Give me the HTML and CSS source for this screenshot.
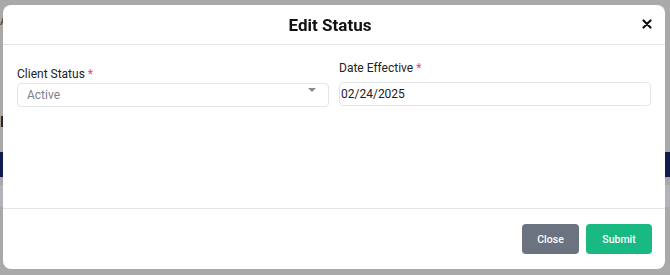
FILE: index.html
```html
<!DOCTYPE html>
<html lang="en">
<head>
    <meta charset="UTF-8">
    <title>Edit Status</title>
    <link rel="stylesheet" href="styles.css">
</head>
<body>
    <!-- page behind the dimmed backdrop -->
    <div class="page">
        <div class="page-title">A</div>
        <div class="page-heading">I</div>
        <div class="page-table-head"></div>
        <div class="page-row"></div>
    </div>

    <div class="modal">
        <div class="modal-header">
            <h2>Edit Status</h2>
            <button class="modal-close" aria-label="Close">
                <svg width="10" height="10" viewBox="0 0 10 10">
                    <path d="M1.5 1.5 L8.5 8.5 M8.5 1.5 L1.5 8.5" stroke="#111" stroke-width="2.2" stroke-linecap="round"/>
                </svg>
            </button>
        </div>

        <div class="modal-body">
            <div class="form-group">
                <label class="label-low">Client Status <span class="req">*</span></label>
                <div class="select">
                    <span>Active</span>
                    <span class="caret"></span>
                </div>
            </div>
            <div class="form-group">
                <label>Date Effective <span class="req">*</span></label>
                <input type="text" class="date-input" value="02/24/2025">
            </div>
        </div>

        <div class="modal-footer">
            <button class="btn btn-close">Close</button>
            <button class="btn btn-submit">Submit</button>
        </div>
    </div>
</body>
</html>
```

FILE: styles.css
```css
:root {
    --backdrop: #a9a9a9;
    --text-color: #1f1f1f;
    --border-color: #e3e5ea;
    --muted: #7d818a;
    --required: #e0467c;
    --close-bg: #6b7280;
    --submit-bg: #19b983;
}

html, body {
    margin: 0;
    height: 100%;
}

body {
    font-family: Roboto, "Liberation Sans", sans-serif;
    background-color: var(--backdrop);
    color: var(--text-color);
    overflow: hidden;
}

.page {
    padding-top: 14px;
}

.page-title {
    font-size: 12px;
    color: #3a3a3a;
    height: 100px;
}

.page-heading {
    font-size: 14px;
    font-weight: bold;
    color: #1a1a1a;
    height: 38px;
}

.page-table-head {
    height: 25px;
    background-color: #101c4e;
}

.page-row {
    margin-top: 8px;
    height: 22px;
    background-color: #b3b4ba;
}

.modal {
    position: fixed;
    left: 3px;
    top: 5px;
    width: 662px;
    height: 264px;
    background-color: #ffffff;
    border-radius: 8px;
    display: flex;
    flex-direction: column;
}

.modal-header {
    height: 39px;
    border-bottom: 1px solid var(--border-color);
    display: flex;
    align-items: center;
    justify-content: center;
    position: relative;
}

.modal-header h2 {
    margin: 0 8px 0 0;
    font-size: 17px;
    font-weight: bold;
    color: #111111;
}

.modal-close {
    position: absolute;
    right: 13px;
    top: 14px;
    background: none;
    border: none;
    padding: 0;
    width: 10px;
    height: 10px;
    display: flex;
}

.modal-body {
    flex: 1;
    display: grid;
    grid-template-columns: 1fr 1fr;
    column-gap: 10px;
    padding: 15px 14px 0 14px;
}

.form-group {
    display: flex;
    flex-direction: column;
}

label {
    font-size: 12px;
    color: #222222;
    height: 22px;
    line-height: 16px;
}

.label-low {
    padding-top: 6px;
    height: 17px;
}

.req {
    color: var(--required);
}

.select,
.date-input {
    box-sizing: border-box;
    height: 24px;
    border: 1px solid var(--border-color);
    border-radius: 4px;
    background-color: #ffffff;
    font-family: Roboto, "Liberation Sans", sans-serif;
}

.select {
    display: flex;
    align-items: center;
    justify-content: space-between;
    padding: 0 12px 0 9px;
    font-size: 12px;
    color: var(--muted);
}

.caret {
    width: 0;
    height: 0;
    border-left: 4px solid transparent;
    border-right: 4px solid transparent;
    border-top: 4px solid #8a8a8a;
    margin-top: -10px;
}

.date-input {
    width: 100%;
    padding: 0 1px;
    font-size: 12px;
    color: #222222;
    outline: none;
}

.modal-footer {
    height: 60px;
    border-top: 1px solid var(--border-color);
    display: flex;
    align-items: center;
    justify-content: flex-end;
    gap: 7px;
    padding-right: 13px;
}

.btn {
    height: 30px;
    border: none;
    border-radius: 4px;
    color: #ffffff;
    font-family: Roboto, "Liberation Sans", sans-serif;
    font-size: 10.5px;
    font-weight: 500;
}

.btn-close {
    width: 57px;
    background-color: var(--close-bg);
}

.btn-submit {
    width: 66px;
    background-color: var(--submit-bg);
}
```
